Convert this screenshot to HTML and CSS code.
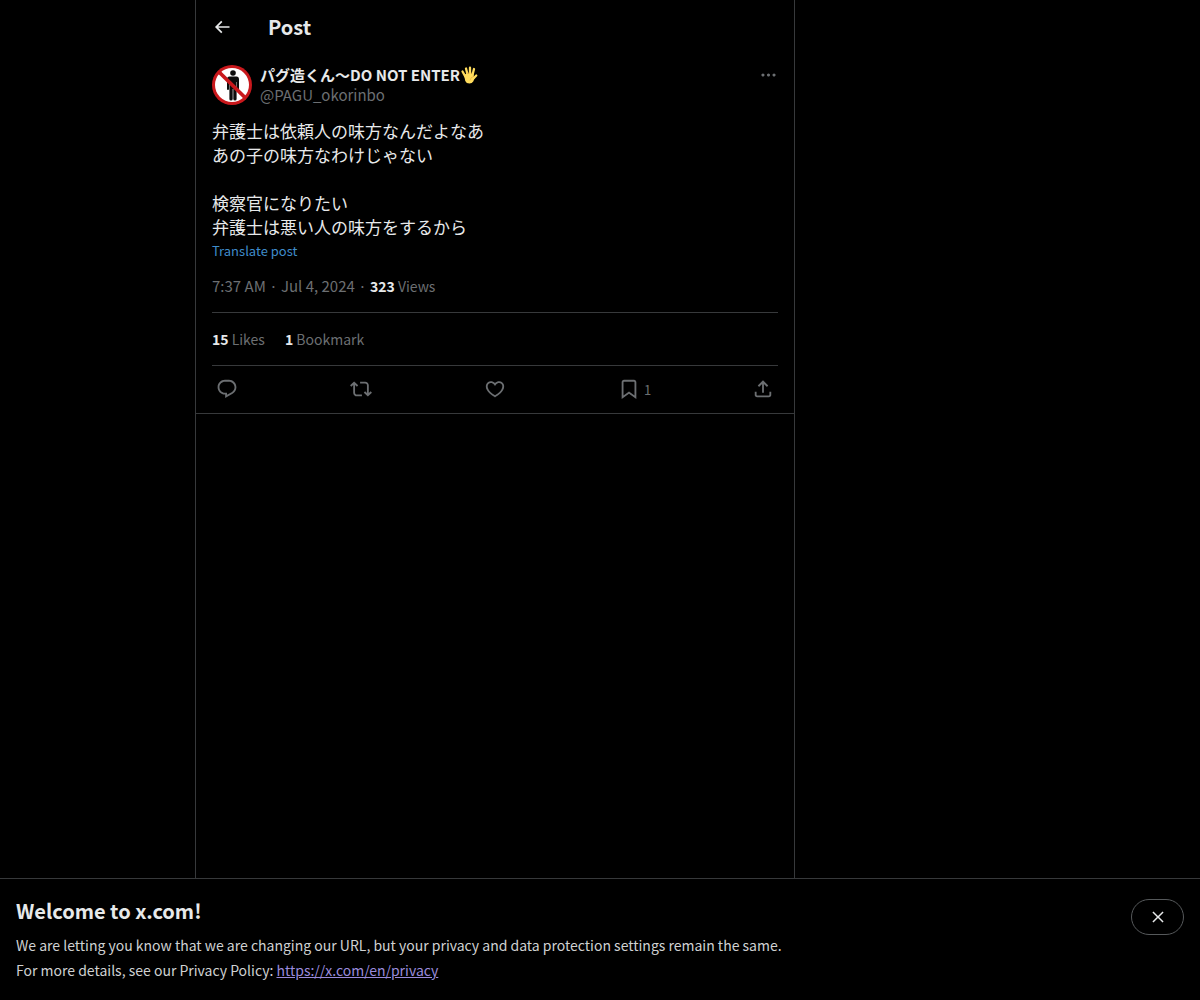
FILE: index.html
```html
<!DOCTYPE html>
<html lang="en">
<head>
    <meta charset="UTF-8">
    <meta name="viewport" content="width=device-width, initial-scale=1.0">
    <title>Post</title>
    <link rel="stylesheet" href="styles.css">
</head>
<body>
    <main class="column">
        <header class="top-bar">
            <button class="icon-btn" aria-label="Back">
                <svg class="icon-back" viewBox="0 0 24 24"><path d="M7.414 13l5.043 5.04-1.414 1.42L3.586 12l7.457-7.46 1.414 1.42L7.414 11H21v2H7.414z"/></svg>
            </button>
            <h1>Post</h1>
        </header>

        <article class="post">
            <div class="author">
                <svg class="avatar" viewBox="0 0 40 40">
                    <circle cx="20" cy="20" r="20" fill="#c9181c"/>
                    <circle cx="20" cy="20" r="17" fill="#fff"/>
                    <g fill="#0c0c0c">
                        <circle cx="21" cy="8" r="2.800"/>
                        <path d="M17.500 11.500h7q2.500 0 2.500 3V24q0 1-1 1t-1-1v-7h-.4V34q0 1.500-1.600 1.500T21.300 34V24h-.6v10q0 1.500-1.700 1.500T17.400 34V17H17v7q0 1-1 1t-1-1v-9.500q0-3 2.500-3z"/>
                    </g>
                    <path d="M7 7l26.500 26" stroke="#c9181c" stroke-width="3.800"/>
                </svg>
                <div class="names">
                    <div class="display-name">
                        <span lang="ja">パグ造くん〜DO NOT ENTER</span>
                        <svg class="hand" viewBox="0 0 36 36" role="img" aria-label="raised hand">
                            <g fill="none" stroke="#ffdc5d" stroke-width="4.600" stroke-linecap="round">
                                <path d="M10.500 21L5 11M15 17L12 5M20 17V3.500M25 18l3-12M25 27l7.500-8"/>
                            </g>
                            <path fill="#ffdc5d" d="M8 18l5-3h14l.5 7 2 1-3 8q-2.500 4-7.500 4-6.500 0-8.500-5z"/>
                            <path d="M15.300 16l-.8-3M18 15.500V12M22.500 16l.4-3M20 29q1-7 7-8" fill="none" stroke="#e5a83a" stroke-width="1.200"/>
                        </svg>
                    </div>
                    <div class="handle">@PAGU_okorinbo</div>
                </div>
                <button class="icon-btn more" aria-label="More">
                    <svg class="icon-more" viewBox="0 0 24 24"><path d="M3 12c0-1.100.9-2 2-2s2 .9 2 2-.9 2-2 2-2-.9-2-2zm9 2c1.100 0 2-.9 2-2s-.9-2-2-2-2 .9-2 2 .9 2 2 2zm7 0c1.100 0 2-.9 2-2s-.9-2-2-2-2 .9-2 2 .9 2 2 2z"/></svg>
                </button>
            </div>

            <p class="post-text" lang="ja">弁護士は依頼人の味方なんだよなあ<br>あの子の味方なわけじゃない<br><br>検察官になりたい<br>弁護士は悪い人の味方をするから</p>
            <button class="translate">Translate post</button>

            <div class="meta">7:37 AM · Jul 4, 2024 · <span class="stat"><strong>323</strong> Views</span></div>
            <div class="stats">
                <span class="stat"><strong>15</strong> Likes</span>
                <span class="stat"><strong>1</strong> Bookmark</span>
            </div>

            <div class="actions">
                <button class="action" aria-label="Reply">
                    <svg viewBox="0 0 24 24"><path d="M1.751 10c0-4.420 3.584-8 8.005-8h4.366c4.490 0 8.129 3.640 8.129 8.130 0 2.960-1.607 5.680-4.196 7.110l-8.054 4.460v-3.690h-.067c-4.490.1-8.183-3.510-8.183-8.010zm8.005-6c-3.317 0-6.005 2.690-6.005 6 0 3.370 2.770 6.080 6.138 6.010l.351-.01h1.761v2.300l5.087-2.810c1.951-1.080 3.163-3.130 3.163-5.360 0-3.390-2.744-6.130-6.129-6.130H9.756z"/></svg>
                </button>
                <button class="action" aria-label="Repost">
                    <svg viewBox="0 0 24 24"><path d="M4.500 3.880l4.432 4.140-1.364 1.460L5.500 7.550V16c0 1.100.896 2 2 2H13v2H7.500c-2.209 0-4-1.790-4-4V7.550L1.432 9.480.068 8.020 4.500 3.880zM16.500 6H11V4h5.500c2.209 0 4 1.790 4 4v8.450l2.068-1.930 1.364 1.460-4.432 4.140-4.432-4.140 1.364-1.460 2.068 1.930V8c0-1.100-.896-2-2-2z"/></svg>
                </button>
                <button class="action" aria-label="Like">
                    <svg viewBox="0 0 24 24"><path d="M16.697 5.500c-1.222-.06-2.679.51-3.890 2.160l-.805 1.090-.806-1.090C9.984 6.010 8.526 5.440 7.304 5.500c-1.243.07-2.349.78-2.910 1.910-.552 1.120-.633 2.780.479 4.820 1.074 1.970 3.257 4.270 7.129 6.610 3.870-2.340 6.052-4.640 7.126-6.610 1.111-2.040 1.030-3.700.477-4.820-.561-1.130-1.666-1.840-2.908-1.910zm4.187 7.690c-1.351 2.480-4.001 5.120-8.379 7.670l-.503.3-.504-.3c-4.379-2.550-7.029-5.190-8.382-7.670-1.360-2.500-1.410-4.860-.514-6.670.887-1.790 2.647-2.910 4.601-3.010 1.651-.09 3.368.56 4.798 2.010 1.429-1.450 3.146-2.100 4.796-2.010 1.954.1 3.714 1.220 4.601 3.010.896 1.810.846 4.170-.514 6.670z"/></svg>
                </button>
                <button class="action" aria-label="Bookmark">
                    <svg viewBox="0 0 24 24"><path d="M4 4.500C4 3.120 5.119 2 6.500 2h11C18.881 2 20 3.120 20 4.500v18.440l-8-5.710-8 5.710V4.500zM6.500 4c-.276 0-.5.22-.5.5v14.560l6-4.290 6 4.290V4.500c0-.28-.224-.5-.5-.5h-11z"/></svg>
                    <span class="count">1</span>
                </button>
                <button class="action" aria-label="Share">
                    <svg viewBox="0 0 24 24"><path d="M12 2.590l5.700 5.700-1.410 1.420L13 6.410V16h-2V6.410l-3.300 3.300-1.410-1.420L12 2.590zM21 15l-.02 3.510c0 1.380-1.120 2.490-2.500 2.490H5.500C4.110 21 3 19.880 3 18.500V15h2v3.500c0 .28.22.5.5.5h12.980c.28 0 .5-.22.5-.5L19 15h2z"/></svg>
                </button>
            </div>
        </article>
    </main>

    <aside class="banner">
        <div class="banner-text">
            <h2>Welcome to x.com!</h2>
            <p>We are letting you know that we are changing our URL, but your privacy and data protection settings remain the same.<br>For more details, see our Privacy Policy: <a href="https://x.com/en/privacy">https://x.com/en/privacy</a></p>
        </div>
        <button class="close" aria-label="Close">
            <svg class="icon-close" viewBox="0 0 24 24"><path d="M10.590 12L4.540 5.960l1.420-1.420L12 10.590l6.040-6.050 1.420 1.420L13.410 12l6.050 6.040-1.420 1.420L12 13.410l-6.040 6.050-1.420-1.420L10.590 12z"/></svg>
        </button>
    </aside>
</body>
</html>
```
FILE: styles.css
```css
* {
    box-sizing: border-box;
}
body {
    margin: 0;
    min-height: 100vh;
    display: flex;
    flex-direction: column;
    background-color: #000;
    color: #e7e9ea;
    font-family: "Noto Sans CJK JP", sans-serif;
    font-size: 15px;
    line-height: 20px;
}
h1, h2, p {
    margin: 0;
}
button {
    padding: 0;
    border: none;
    background: none;
    color: inherit;
    font: inherit;
    cursor: pointer;
}
svg {
    display: block;
    flex: none;
    fill: currentColor;
}
strong {
    color: #e7e9ea;
    font-weight: 700;
}

/* post column */
.column {
    flex: 1;
    width: 100%;
    max-width: 600px;
    margin-left: max(0px, calc(50% - 405px));
    border-left: 1px solid #37393b;
    border-right: 1px solid #37393b;
}
.top-bar {
    display: flex;
    align-items: center;
    gap: 36px;
    height: 53px;
    padding: 0 16px;
}
.top-bar h1 {
    font-size: 20px;
    line-height: 24px;
}
.icon-back {
    width: 20px;
    height: 20px;
}
.post {
    padding: 12px 16px 0;
    border-bottom: 1px solid #37393b;
}
.author {
    display: flex;
    gap: 8px;
    margin-bottom: 14px;
}
.avatar {
    width: 40px;
    height: 40px;
}
.names {
    flex: 1;
}
.display-name {
    display: flex;
    align-items: center;
    font-weight: 700;
}
.hand {
    width: 18px;
    height: 18px;
}
.handle, .meta, .stats, .actions, .more {
    color: #6c6f72;
}
.more {
    align-self: flex-start;
}
.icon-more {
    width: 19px;
    height: 20px;
}
.post-text {
    font-size: 17px;
    line-height: 24px;
}
.translate {
    display: block;
    color: #3f8ccb;
    font-size: 13px;
    line-height: 24px;
}
.meta {
    padding: 13px 0 16px;
}
.stat {
    font-size: 14px;
}
.stats {
    display: flex;
    gap: 20px;
    padding: 16px 0;
    border-top: 1px solid #37393b;
    border-bottom: 1px solid #37393b;
}
.actions {
    display: flex;
    height: 47px;
    padding: 0 4px 1px;
}
.action {
    flex: 1;
    display: flex;
    align-items: center;
    gap: 4px;
    font-size: 13px;
}
.action:last-child {
    flex: none;
}
.action svg {
    width: 22px;
    height: 22px;
}
.count {
    padding-top: 2px;
}

/* notice at the bottom of the window */
.banner {
    position: sticky;
    bottom: 0;
    display: flex;
    align-items: flex-start;
    justify-content: space-between;
    padding: 20px 16px 17px;
    border-top: 1px solid #37393b;
    background-color: #000;
}
.banner h2 {
    margin-bottom: 10px;
    font-size: 20px;
    line-height: 24px;
}
.banner p {
    color: #cfd1d2;
    font-size: 14px;
    line-height: 25px;
}
.banner a {
    color: #9a8bdc;
}
.close {
    display: flex;
    align-items: center;
    justify-content: center;
    width: 53px;
    height: 36px;
    border: 1px solid #56595b;
    border-radius: 18px;
}
.icon-close {
    width: 18px;
    height: 18px;
}
```
